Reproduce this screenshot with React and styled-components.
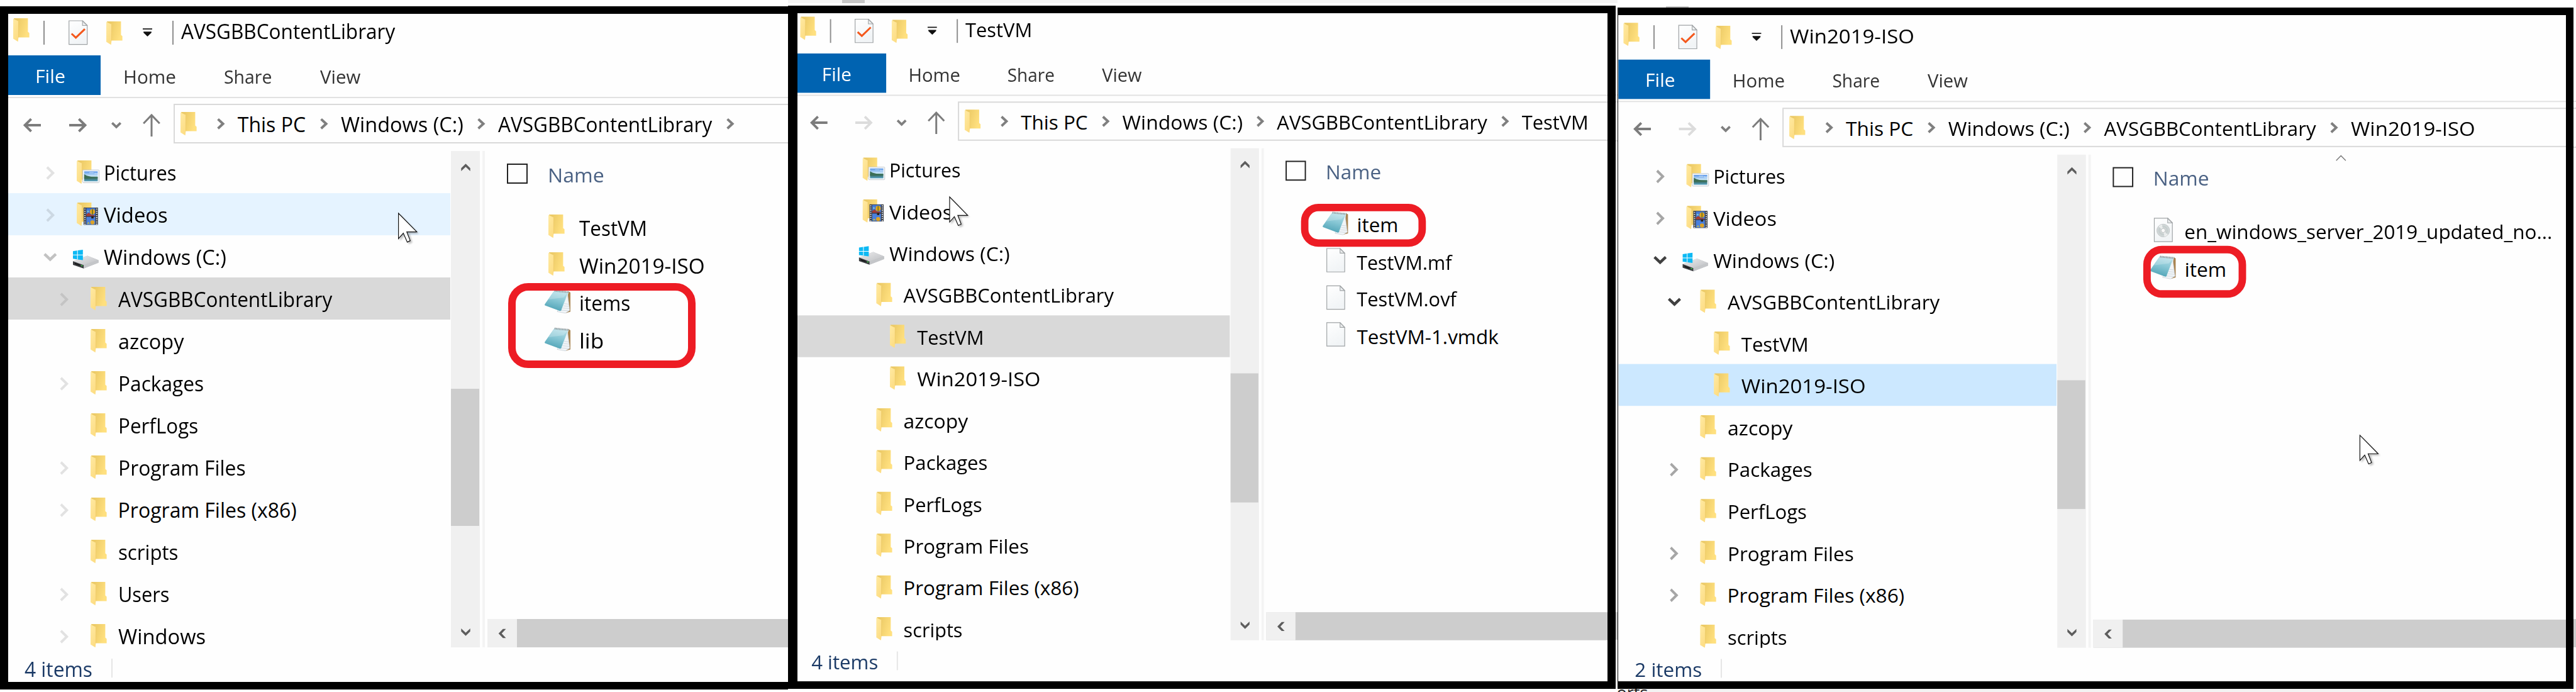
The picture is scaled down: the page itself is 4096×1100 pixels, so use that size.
import React, { useLayoutEffect, useRef, useState } from "react";
import styled, { createGlobalStyle } from "styled-components";

const GlobalStyle = createGlobalStyle`
  html, body { margin: 0; padding: 0; background: #fff; }
  body { width: 4096px; height: 1100px; overflow: hidden; font-family: "Open Sans", "Noto Sans", sans-serif; color: #000; }
  * { box-sizing: border-box; }
  svg { display: block; flex: none; overflow: visible; }
`;

/* ---------- page ---------- */
const Screen = styled.main`
  display: flex;
  align-items: flex-start;
  width: 4096px;
  height: 1100px;
  overflow: hidden;
  background: #fff;
`;
const Column = styled.div`
  display: flex;
  flex-direction: column;
  flex: none;
  width: ${(p) => p.$w}px;
  height: 1100px;
  padding-top: ${(p) => p.$top || 0}px;
  overflow: hidden;
`;
const Strip = styled.div`
  display: flex;
  flex: none;
  height: ${(p) => p.$h}px;
  margin-bottom: ${(p) => p.$gap || 0}px;
  padding-left: ${(p) => p.$pad || 0}px;
  background: ${(p) => p.$bg || "transparent"};
`;
const StripMark = styled.i`
  width: 36px;
  height: 100%;
  background: #c6c6c6;
`;
const Frame = styled.section`
  flex: none;
  height: ${(p) => p.$h}px;
  border: 12px solid #000;
  border-left-width: ${(p) => p.$left}px;
  border-right-width: ${(p) => p.$right}px;
  overflow: hidden;
  background: #fefefe;
`;
const Canvas = styled.div`
  position: relative;
  display: flex;
  flex-direction: column;
  width: 1560px;
  height: 1075px;
  transform-origin: 0 0;
  transform: translate(${(p) => p.$x}px, ${(p) => p.$y}px) scale(${(p) => p.$sx}, ${(p) => p.$sy});
`;
const Footnote = styled.div`
  display: flex;
  flex: none;
  height: 5px;
  overflow: hidden;
  background: ${(p) => p.$bg || "#fff"};
`;
const FootText = styled.span`
  font-size: 27px;
  line-height: 12px;
  margin-left: ${(p) => p.$x}px;
  color: #222;
`;
const Sliver = styled.div`
  display: flex;
  flex-direction: column;
  flex: none;
  width: ${(p) => p.$w}px;
  height: 1100px;
`;
const SliverPart = styled.i`
  flex: none;
  height: ${(p) => p.$h}px;
  background: ${(p) => p.$bg || "#fff"};
`;

/* ---------- text ---------- */
const TextBox = styled.span`
  display: block;
  flex: none;
  width: ${(p) => p.$w}px;
  margin-left: ${(p) => p.$x || 0}px;
  padding-top: ${(p) => p.$drop || 0}px;
  font-size: ${(p) => p.$size || 32}px;
  line-height: 44px;
  color: ${(p) => p.$color || "#000"};
  white-space: nowrap;
`;
const Glyphs = styled.span`
  display: inline-block;
  transform-origin: 0 50%;
`;

const WIDTHS = {
  AVSGBBContentLibrary: 340, Pictures: 115.5, Videos: 101.5, "Windows (C:)": 195,
  azcopy: 104.5, Packages: 136.5, PerfLogs: 127.5, "Program Files": 203,
  "Program Files (x86)": 284, scripts: 95.5, Users: 81.5, Windows: 139,
  TestVM: 108, "Win2019-ISO": 199.5, items: 81, lib: 39.5, item: 67,
  "TestVM.mf": 154, "TestVM.ovf": 162, "TestVM-1.vmdk": 229,
  "en_windows_server_2019_updated_no...": 590, "4 items": 108, "2 items": 108,
  "This PC": 108, File: 48, Home: 84, Share: 76.5, View: 64, Name: 90,
};

function Label({ children, ...rest }) {
  const ref = useRef(null);
  const [k, setK] = useState(1);
  const w = WIDTHS[children] || 100;
  useLayoutEffect(() => {
    if (ref.current) setK(w / ref.current.offsetWidth);
  }, [w]);
  return (
    <TextBox $w={w} {...rest}>
      <Glyphs ref={ref} style={{ transform: `scaleX(${k})` }}>{children}</Glyphs>
    </TextBox>
  );
}

/* ---------- icons ---------- */
const Gradients = () => (
  <svg width="0" height="0" style={{ position: "absolute" }}>
    <defs>
      <linearGradient id="fBack" x1="0" y1="0" x2="1" y2="0.35">
        <stop offset="0.2" stopColor="#ecca66" /><stop offset="1" stopColor="#ffe07f" />
      </linearGradient>
      <linearGradient id="fFront" x1="0" y1="0" x2="0.6" y2="1">
        <stop offset="0" stopColor="#ffeaa3" /><stop offset="1" stopColor="#fddd84" />
      </linearGradient>
      <linearGradient id="paper" x1="0" y1="0" x2="0.4" y2="1">
        <stop offset="0" stopColor="#ffffff" /><stop offset="1" stopColor="#f1f4f6" />
      </linearGradient>
      <linearGradient id="note" x1="0.7" y1="0" x2="0.4" y2="1">
        <stop offset="0" stopColor="#b9e1ea" /><stop offset="0.5" stopColor="#86c6d4" /><stop offset="1" stopColor="#4fa3b6" />
      </linearGradient>
      <linearGradient id="drive" x1="0" y1="0" x2="1" y2="1">
        <stop offset="0" stopColor="#ececee" /><stop offset="1" stopColor="#bcbec1" />
      </linearGradient>
      <linearGradient id="sky" x1="0" y1="0" x2="0" y2="1">
        <stop offset="0" stopColor="#5b97ea" /><stop offset="0.5" stopColor="#cfeaf8" /><stop offset="0.55" stopColor="#4b8274" /><stop offset="0.75" stopColor="#3f7878" /><stop offset="1" stopColor="#5ba6c9" />
      </linearGradient>
      <radialGradient id="disc">
        <stop offset="0" stopColor="#f4f4f4" /><stop offset="0.6" stopColor="#c4cccc" /><stop offset="1" stopColor="#d9dedf" />
      </radialGradient>
    </defs>
  </svg>
);
const FolderShape = () => (
  <>
    <path d="M1 0H23.4V21.5L25.6 23.5V30.4H8Z" fill="url(#fBack)" />
    <path d="M0 0.8L8.4 4.8V31L7.6 37.2L0 32.6Z" fill="url(#fFront)" />
    <path d="M8.4 5V30.4" stroke="#e6c05c" strokeWidth="0.7" opacity="0.7" />
  </>
);
const Folder = () => <svg width="26" height="37.4" viewBox="0 0 26 37.4"><FolderShape /></svg>;
const Pictures = () => (
  <svg width="36" height="37.4" viewBox="0 0 36 37.4">
    <FolderShape />
    <rect x="9.6" y="15.2" width="26" height="20.2" rx="1" fill="#f8f9fa" stroke="#c3c9cf" strokeWidth="1" />
    <rect x="11.8" y="17.4" width="21.6" height="15.8" fill="url(#sky)" />
    <path d="M11.8 22L16 24.2L24 26.3L33.4 27V28.2L11.8 29Z" fill="#3c6e55" />
    <path d="M20 19.5h9v1.5h6" stroke="#d6e8fb" strokeWidth="1.4" fill="none" strokeDasharray="7 2" opacity="0.6" />
  </svg>
);
const Videos = () => (
  <svg width="36" height="37.4" viewBox="0 0 36 37.4">
    <FolderShape />
    <rect x="11" y="8" width="22.8" height="27.4" fill="#33363d" />
    <path d="M13 9.5V35M31.8 9.5V35" stroke="#d9dce2" strokeWidth="2" strokeDasharray="1.8 1.6" />
    <rect x="15.2" y="8.8" width="14.4" height="12.6" fill="#4377d6" />
    <rect x="15.2" y="22.8" width="14.4" height="12" fill="#4a80dd" />
    <ellipse cx="25" cy="14.6" rx="4.2" ry="4.4" fill="#e3a51f" />
    <path d="M24 10.4h2v8.6h-2Z" fill="#7d7a1e" />
    <path d="M15.2 19L19 16L23 19.5L27 19.8L29.6 21.4H15.2Z" fill="#a53b30" />
    <circle cx="18" cy="14" r="1.5" fill="#7cc2cf" />
    <path d="M23.2 21.6h3.6v3.6h-3.6Z" fill="#2a2018" />
    <circle cx="25" cy="31.5" r="3.3" fill="#dba227" />
    <path d="M16.5 33.5l2-2.6l2.2 2.6Z" fill="#d8c027" />
  </svg>
);
const Drive = () => (
  <svg width="41" height="30" viewBox="0 0 41 30">
    <path d="M0 18.2L23 9.4L40.6 16.4V20.4L17 29.8L0 23.6Z" fill="#b9bbbe" />
    <path d="M0 18.2L23 9.4L40.6 16.4L17.2 24.6Z" fill="url(#drive)" />
    <path d="M0 18.2L17.2 24.6V29.8L0 24Z" fill="#3a3c3f" />
    <path d="M3 20.8L11 23.7V25.6L3 22.8Z" fill="#17181a" />
    <path d="M17.2 24.6L40.6 16.4V20.8L17.2 29.8Z" fill="#c4c6c9" />
    <rect x="13.2" y="24.4" width="2" height="1.8" fill="#3fd447" />
    <path d="M0 2.2L6.7 1.2V7.8H0ZM7.7 1.1L15.8 0V7.8H7.7ZM0 8.7H6.7V15.2L0 14.3ZM7.7 8.7H15.8V16.4L7.7 15.4Z" fill="#0db9f4" />
  </svg>
);
const PageShape = () => (
  <>
    <path d="M0.7 0.7H22.4L29.7 8V38.3H0.7Z" fill="url(#paper)" stroke="#9fa3a5" strokeWidth="1.2" />
    <path d="M22.2 1V8.2H29.4Z" fill="#eef0f1" stroke="#9fa3a5" strokeWidth="1.1" />
  </>
);
const Page = () => <svg width="30.4" height="39" viewBox="0 0 30.4 39"><PageShape /></svg>;
const CheckPage = () => (
  <svg width="30.4" height="39.6" viewBox="0 0 30.4 39">
    <PageShape />
    <path d="M4.8 21.2L11.6 27.6L26 13.8" fill="none" stroke="#f4581c" strokeWidth="3" />
  </svg>
);
const DiscPage = () => (
  <svg width="30.4" height="39" viewBox="0 0 30.4 39">
    <PageShape />
    <circle cx="15" cy="20.4" r="10.2" fill="url(#disc)" stroke="#b8bdbe" strokeWidth="0.8" />
    <path d="M15 20.4L7.5 14A10 10 0 0 1 13 10.6ZM15 20.4L22.5 27A10 10 0 0 1 17 30.2Z" fill="#fff" opacity="0.6" />
    <circle cx="15" cy="20.4" r="3.3" fill="#fafafa" stroke="#b0b5b6" strokeWidth="0.8" />
  </svg>
);
const Notepad = () => (
  <svg width="41.2" height="38" viewBox="0 0 41.2 38">
    <path d="M37.6 3L41 5L41 35.4L34 37.4Z" fill="#a98450" />
    <path d="M36 4L40 33.6L33 37.8L20 35.4Z" fill="#f1f5f8" stroke="#b9c3cb" strokeWidth="0.6" />
    <path d="M29 22.5L38 23.5M28 26L38.6 27M26.5 29.5L39 30.5M25 33L39 34" stroke="#c3ccd4" strokeWidth="0.7" />
    <path d="M15.6 1.6L38 4L27 32.6Q26 35 23.5 33.9L0.6 25.4Q-0.3 24.8 0.3 23.5Z" fill="url(#note)" />
    <path d="M15.6 2L38 4.2L30 13L6 16Z" fill="#fff" opacity="0.22" />
    <path d="M38 4L27 32.6" stroke="#e8f4f7" strokeWidth="0.9" />
    <path d="M16 2.2L38.5 4.4" stroke="#8d9395" strokeWidth="3" strokeDasharray="1.3 1.1" />
  </svg>
);
const ChevronRight = ({ color = "#7f7f7f", w = 12.4, h = 17.6, t = 4 }) => (
  <svg width={w} height={h} viewBox="0 0 12.4 17.6" preserveAspectRatio="none">
    <path d="M1.6 1.4L9.6 8.8L1.6 16.2" fill="none" stroke={color} strokeWidth={t} />
  </svg>
);
const ChevronDown = ({ color = "#7f7f7f", w = 16, h = 10, t = 3.8 }) => (
  <svg width={w} height={h} viewBox="0 0 16 10" preserveAspectRatio="none">
    <path d="M1.3 1.4L8 7.8L14.7 1.4" fill="none" stroke={color} strokeWidth={t} />
  </svg>
);
const ArrowH = ({ color = "#7c7c7c", flip }) => (
  <svg width="28" height="22" viewBox="0 0 28 22" transform={flip ? "scale(-1 1)" : undefined}>
    <path d="M28 11H3.2M12.6 1.2L2.6 11L12.6 20.8" fill="none" stroke={color} strokeWidth="3.9" />
  </svg>
);
const ArrowUp = () => (
  <svg width="28" height="36" viewBox="0 0 28 36">
    <path d="M14 36V2.4M1.2 15.2L14 2L26.8 15.2" fill="none" stroke="#7c7c7c" strokeWidth="3" />
  </svg>
);
const QuickMenu = () => (
  <svg width="15" height="13" viewBox="0 0 15 13">
    <path d="M0 1H15" stroke="#111" strokeWidth="1.7" />
    <path d="M1.2 5.2H13.8V7L7.5 13L1.2 7Z" fill="#111" />
  </svg>
);
const turns = { up: 180, down: 0, left: 90 };
const ScrollArrow = ({ dir }) => (
  <svg width="15" height="12" viewBox="0 0 15 12" transform={`rotate(${turns[dir]})`}>
    <path d="M0.3 0L7.5 6.8L14.7 0V4.8L7.5 11.8L0.3 4.8Z" fill="#5d5d5d" />
  </svg>
);
const SortCaret = () => (
  <svg width="16.5" height="9" viewBox="0 0 16.5 9">
    <path d="M0.6 8.6L8.2 0.8L15.9 8.6" fill="none" stroke="#777" strokeWidth="1.4" />
  </svg>
);
const Pointer = () => (
  <svg width="32" height="49" viewBox="0 0 32 49">
    <path d="M3 3V45L10.8 35.6L17 50L22.6 47.4L18 33.4H33Z" fill="#000" opacity="0.25" style={{ filter: "blur(1.6px)" }} />
    <path d="M0.6 1V41.4L8.3 32.6L14.6 46.9L19.3 44.6L13.8 30.6H29.8Z" fill="#fff" stroke="#111" strokeWidth="1.2" />
  </svg>
);
const ICONS = { folder: Folder, pictures: Pictures, videos: Videos, drive: Drive, page: Page, disc: DiscPage, notepad: Notepad };

/* ---------- window parts ---------- */
const TitleBar = styled.header`
  display: flex;
  flex: none;
  align-items: flex-start;
  height: 66px;
`;
const Slot = styled.div`
  flex: none;
  width: ${(p) => p.$w}px;
  margin-left: ${(p) => p.$x || 0}px;
  margin-top: ${(p) => p.$y || 0}px;
`;
const Divider = styled.i`
  flex: none;
  width: 1.6px;
  height: 38px;
  margin: 11px 0 0 ${(p) => p.$x}px;
  background: #8f8f8f;
`;
const Ribbon = styled.nav`
  display: flex;
  flex: none;
  align-items: flex-start;
  height: 67.5px;
  border-bottom: 2px solid #e2e2e2;
`;
const FileTab = styled.div`
  flex: none;
  width: 146.5px;
  height: 63.4px;
  padding: 11px 0 0 42.5px;
  background: #0063b1;
`;
const NavBar = styled.div`
  display: flex;
  flex: none;
  align-items: center;
  height: 84.5px;
  padding: 2px 0 0 24.4px;
`;
const NavIcon = styled.div`
  flex: none;
  margin-right: ${(p) => p.$gap}px;
`;
const Address = styled.div`
  display: flex;
  align-items: center;
  flex: none;
  width: 1400px;
  height: 63px;
  padding-left: 8.5px;
  border: 2px solid #d9d9d9;
  margin-top: -4px;
`;
const Crumb = styled.div`
  display: flex;
  align-items: center;
  flex: none;
  margin-left: ${(p) => p.$x}px;
  gap: 20.6px;
`;
const Body = styled.div`
  display: flex;
  flex: none;
  height: 789px;
`;
const Tree = styled.div`
  flex: none;
  width: 703px;
  height: 789px;
  overflow: hidden;
`;
const TreeRow = styled.div`
  display: flex;
  align-items: center;
  height: 67px;
  padding-left: ${(p) => 52 + p.$level * 22.3}px;
  background: ${(p) => p.$bg || "transparent"};
`;
const Expander = styled.div`
  display: flex;
  justify-content: center;
  flex: none;
  width: 30px;
  margin-top: 2px;
`;
const TreeIcon = styled.div`
  flex: none;
  width: ${(p) => (p.$wide ? 49.5 : 43.5)}px;
  margin: ${(p) => (p.$wide ? "8px 0 0 20.8px" : "0 0 0 26.8px")};
`;
const VScroll = styled.div`
  position: relative;
  display: flex;
  flex-direction: column;
  align-items: center;
  justify-content: space-between;
  flex: none;
  width: 46.4px;
  margin-left: 1px;
  padding: 20px 0 18px;
  background: #f0f0f0;
`;
const VThumb = styled.i`
  position: absolute;
  left: 0;
  right: 1px;
  top: ${(p) => p.$top}px;
  height: ${(p) => p.$h}px;
  background: #cdcdcd;
`;
const PaneSplit = styled.i`
  flex: none;
  width: 3.4px;
  margin: 0 4.3px 0 3.8px;
  background: #f4f4f4;
`;
const Files = styled.div`
  display: flex;
  flex-direction: column;
  flex: none;
  width: 780px;
`;
const FilesHeader = styled.div`
  display: flex;
  align-items: center;
  flex: none;
  height: 72px;
  padding-left: 31.4px;
`;
const CheckBox = styled.i`
  flex: none;
  width: 33px;
  height: 32px;
  border: 2px solid #222;
`;
const FileList = styled.div`
  flex: 1;
  padding-top: 18.4px;
`;
const FileRow = styled.div`
  display: flex;
  align-items: center;
  height: 59.6px;
  padding-left: 90.9px;
`;
const FileIcon = styled.div`
  flex: none;
  width: ${(p) => (p.$wide ? 55.6 : 49.3)}px;
  margin-left: ${(p) => (p.$wide ? 0 : 6.3)}px;
`;
const HScroll = styled.div`
  display: flex;
  flex: none;
  height: 45px;
  background: #cdcdcd;
`;
const HButton = styled.div`
  display: flex;
  align-items: center;
  justify-content: center;
  width: 47.6px;
  background: #f0f0f0;
`;
const StatusBar = styled.footer`
  display: flex;
  flex: none;
  height: 55px;
  padding: 12.5px 0 0 26px;
`;
const StatusSplit = styled.i`
  width: 1.5px;
  height: 30px;
  margin: 5.5px 0 0 30px;
  background: #e6e6e6;
`;
const Floating = styled.div`
  position: absolute;
  left: ${(p) => p.$x}px;
  top: ${(p) => p.$y}px;
`;
const Highlight = styled.div`
  position: absolute;
  left: ${(p) => p.$box[0]}px;
  top: ${(p) => p.$box[1]}px;
  width: ${(p) => p.$box[2]}px;
  height: ${(p) => p.$box[3]}px;
  border: 12.4px solid #ed1c24;
  border-radius: ${(p) => p.$r}px;
`;

const TEXT_BLUE = "#1b3a66";

function Explorer({ win }) {
  return (
    <Canvas $x={win.x} $y={win.y} $sx={win.sx} $sy={win.sy}>
      <TitleBar>
        <Slot $x={8.3} $y={7.3} $w={26}><Folder /></Slot>
        <Divider $x={22.2} />
        <Slot $x={37.8} $y={10.4} $w={30.4}><CheckPage /></Slot>
        <Slot $x={30} $y={12.4} $w={26}><Folder /></Slot>
        <Slot $x={31.8} $y={23} $w={15}><QuickMenu /></Slot>
        <Divider $x={32} />
        <Label $x={12.6} $drop={5.9}>{win.title}</Label>
      </TitleBar>
      <Ribbon>
        <FileTab><Label $size={29} $color="#fff">File</Label></FileTab>
        <Label $size={29} $x={36} $drop={12} $color="#333">Home</Label>
        <Label $size={29} $x={76.4} $drop={12} $color="#333">Share</Label>
        <Label $size={29} $x={76.6} $drop={12} $color="#333">View</Label>
      </Ribbon>
      <NavBar>
        <NavIcon $gap={45}><ArrowH /></NavIcon>
        <NavIcon $gap={39}><ArrowH flip color={win.canForward ? "#7c7c7c" : "#dcdcdc"} /></NavIcon>
        <NavIcon $gap={33.3}><ChevronDown /></NavIcon>
        <NavIcon $gap={21.6}><ArrowUp /></NavIcon>
        <Address>
          <Folder />
          {win.path.map((name, i) => (
            <Crumb key={i} $x={i === 0 ? 32 : 22.8}>
              <ChevronRight />
              {name && <Label $drop={3}>{name}</Label>}
            </Crumb>
          ))}
        </Address>
      </NavBar>
      <Body>
        <Tree>
          {win.tree.map(([name, icon, level, state, bg], i) => {
            const Icon = ICONS[icon];
            return (
              <TreeRow key={i} $level={level} $bg={bg}>
                <Expander>
                  {state === "closed" && <ChevronRight w={14.4} h={22} t={3.4} color={win.closedColor} />}
                  {state === "faint" && <ChevronRight w={14.4} h={22} t={3.4} color="#c4c4c4" />}
                  {state === "hover" && <ChevronRight w={14.4} h={22} t={3.4} color="#ccd8e3" />}
                  {state === "open" && <ChevronDown w={21.6} h={13.4} t={3.3} color={win.openColor} />}
                </Expander>
                <TreeIcon $wide={icon === "drive"}><Icon /></TreeIcon>
                <Label $drop={3.8}>{name}</Label>
              </TreeRow>
            );
          })}
        </Tree>
        <VScroll>
          <ScrollArrow dir="up" />
          <VThumb $top={win.thumb[0]} $h={win.thumb[1]} />
          <ScrollArrow dir="down" />
        </VScroll>
        <PaneSplit />
        <Files>
          <FilesHeader>
            <CheckBox />
            <Label $x={31.5} $drop={4} $size={31} $color="#4a6183">Name</Label>
          </FilesHeader>
          <FileList>
            {win.files.map(([name, icon]) => {
              const Icon = ICONS[icon];
              return (
                <FileRow key={name}>
                  <FileIcon $wide={icon === "notepad"}><Icon /></FileIcon>
                  <Label $drop={6}>{name}</Label>
                </FileRow>
              );
            })}
          </FileList>
          <HScroll><HButton><ScrollArrow dir="left" /></HButton></HScroll>
        </Files>
      </Body>
      <StatusBar>
        <Label $color={TEXT_BLUE}>{win.status}</Label>
        <StatusSplit />
      </StatusBar>
      {win.sorted && <Floating $x={1150.7} $y={218.8}><SortCaret /></Floating>}
      <Highlight $box={win.mark} $r={win.radius} />
      <Floating $x={win.pointer[0]} $y={win.pointer[1]}><Pointer /></Floating>
    </Canvas>
  );
}

/* ---------- data ---------- */
const LIB = "AVSGBBContentLibrary";
const GRAY = "#d9d9d9";
const WINDOWS = [
  {
    title: LIB, x: 0, y: 0, sx: 1, sy: 1, canForward: true,
    path: ["This PC", "Windows (C:)", LIB, ""],
    closedColor: "#e2e2e2", openColor: "#c2c2c2",
    tree: [
      ["Pictures", "pictures", 0, "closed"],
      ["Videos", "videos", 0, "hover", "#e5f3ff"],
      ["Windows (C:)", "drive", 0, "open"],
      [LIB, "folder", 1, "faint", GRAY],
      ["azcopy", "folder", 1],
      ["Packages", "folder", 1, "closed"],
      ["PerfLogs", "folder", 1],
      ["Program Files", "folder", 1, "closed"],
      ["Program Files (x86)", "folder", 1, "closed"],
      ["scripts", "folder", 1],
      ["Users", "folder", 1, "closed"],
      ["Windows", "folder", 1, "closed"],
    ],
    files: [["TestVM", "folder"], ["Win2019-ISO", "folder"], ["items", "notepad"], ["lib", "notepad"]],
    thumb: [378.3, 217.5], status: "4 items",
    mark: [794.6, 427.5, 298.2, 135], radius: 32, pointer: [620.4, 315.6],
  },
  {
    title: "TestVM", x: -3.4, y: -1.4, sx: 0.983, sy: 0.9912,
    path: ["This PC", "Windows (C:)", LIB, "TestVM"],
    tree: [
      ["Pictures", "pictures", 0],
      ["Videos", "videos", 0],
      ["Windows (C:)", "drive", 0],
      [LIB, "folder", 1],
      ["TestVM", "folder", 2, "", GRAY],
      ["Win2019-ISO", "folder", 2],
      ["azcopy", "folder", 1],
      ["Packages", "folder", 1],
      ["PerfLogs", "folder", 1],
      ["Program Files", "folder", 1],
      ["Program Files (x86)", "folder", 1],
      ["scripts", "folder", 1],
    ],
    files: [["item", "notepad"], ["TestVM.mf", "page"], ["TestVM.ovf", "page"], ["TestVM-1.vmdk", "page"]],
    thumb: [360.8, 206.8], status: "4 items",
    mark: [817.8, 307.2, 202.6, 69.3], radius: 28, pointer: [249.3, 294.8],
  },
  {
    title: "Win2019-ISO", x: 0.5, y: 5.2, sx: 0.991, sy: 0.9935,
    path: ["This PC", "Windows (C:)", LIB, "Win2019-ISO"],
    closedColor: "#a6a6a6", openColor: "#404040", sorted: true,
    tree: [
      ["Pictures", "pictures", 0, "closed"],
      ["Videos", "videos", 0, "closed"],
      ["Windows (C:)", "drive", 0, "open"],
      [LIB, "folder", 1, "open"],
      ["TestVM", "folder", 2],
      ["Win2019-ISO", "folder", 2, "", "#cce8ff"],
      ["azcopy", "folder", 1],
      ["Packages", "folder", 1, "closed"],
      ["PerfLogs", "folder", 1],
      ["Program Files", "folder", 1, "closed"],
      ["Program Files (x86)", "folder", 1, "closed"],
      ["scripts", "folder", 1],
    ],
    files: [["en_windows_server_2019_updated_no...", "disc"], ["item", "notepad"]],
    thumb: [360.6, 206], status: "2 items",
    mark: [841.8, 364.2, 165.1, 83.2], radius: 30, pointer: [1188.5, 665.8],
  },
];

export default function App() {
  return (
    <>
      <GlobalStyle />
      <Gradients />
      <Screen>
        <Column $w={1253} $top={10}>
          <Frame $h={1086} $left={13} $right={0}><Explorer win={WINDOWS[0]} /></Frame>
        </Column>
        <Column $w={1316}>
          <Strip $h={5} $gap={4} $pad={86} $bg="#f4f4f4"><StripMark /></Strip>
          <Frame $h={1086} $left={15} $right={13}><Explorer win={WINDOWS[1]} /></Frame>
        </Column>
        <Sliver $w={3}>
          <SliverPart $h={5} $bg="#f4f4f4" />
          <SliverPart $h={145} />
          <SliverPart $h={2} $bg="#e2e2e2" />
          <SliverPart $h={9} />
          <SliverPart $h={2} $bg="#d9d9d9" />
          <SliverPart $h={60} />
          <SliverPart $h={2} $bg="#d9d9d9" />
          <SliverPart $h={748} />
          <SliverPart $h={44} $bg="#cdcdcd" />
        </Sliver>
        <Column $w={1520} $top={10}>
          <Strip $h={2} $pad={77}><StripMark /></Strip>
          <Frame $h={1083} $left={1} $right={12}><Explorer win={WINDOWS[2]} /></Frame>
          <Footnote $bg="#f3f3f3"><FootText $x={-18}>ports</FootText></Footnote>
        </Column>
        <Sliver $w={4}>
          <SliverPart $h={160} />
          <SliverPart $h={2} $bg="#e2e2e2" />
          <SliverPart $h={9} />
          <SliverPart $h={2} $bg="#d9d9d9" />
          <SliverPart $h={60} />
          <SliverPart $h={2} $bg="#d9d9d9" />
          <SliverPart $h={749} />
          <SliverPart $h={45} $bg="#cdcdcd" />
        </Sliver>
      </Screen>
    </>
  );
}
